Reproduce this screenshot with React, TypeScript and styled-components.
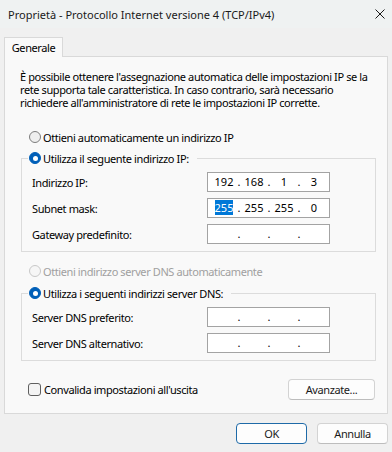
import React from "react";
import styled, { createGlobalStyle } from "styled-components";

const Global = createGlobalStyle`
  html, body { margin: 0; padding: 0; }
  body {
    background: #f0f0f0;
    font-family: "Noto Sans", "Open Sans", sans-serif;
    font-size: 11px;
    letter-spacing: -0.4px;
    color: #000;
  }
  * { box-sizing: border-box; }
`;

const Window = styled.div`
  width: 392px;
  height: 452px;
  display: flex;
  flex-direction: column;
  background: #f0f0f0;
  overflow: hidden;
`;

const TitleBar = styled.div`
  height: 28px;
  display: flex;
  align-items: center;
  justify-content: space-between;
  padding: 0 7px 0 8px;
  background: #eff2f2;
`;

const TitleText = styled.span`
  font-size: 11px;
  letter-spacing: 0;
  color: #1a1a1a;
  white-space: nowrap;
`;

const CloseIcon = styled.svg`
  width: 10px;
  height: 10px;
  display: block;
`;

const TabStrip = styled.div`
  display: flex;
  padding: 9px 4px 0 4px;
`;

const Tab = styled.div`
  width: 59px;
  height: 20px;
  margin-bottom: -1px;
  position: relative;
  z-index: 1;
  display: flex;
  align-items: center;
  justify-content: center;
  background: #f9f9f9;
  border: 1px solid #d9d9d9;
  border-bottom: none;
`;

const Panel = styled.div`
  margin: 0 4px;
  height: 358px;
  background: #f9f9f9;
  border: 1px solid #d9d9d9;
  display: flex;
  flex-direction: column;
  padding: 13px 0 0 0;
`;

const Description = styled.p`
  margin: 0 0 0 15px;
  line-height: 13px;
  width: 352px;
`;

const RadioRow = styled.label<{ $top: number; $left?: number; $disabled?: boolean }>`
  display: flex;
  align-items: center;
  gap: 2px;
  height: 14px;
  margin: ${(p) => p.$top}px 0 0 ${(p) => p.$left ?? 24}px;
  color: ${(p) => (p.$disabled ? "#a0a0a0" : "#000")};
`;

const RadioDot = styled.span<{ $checked?: boolean; $disabled?: boolean }>`
  width: 12px;
  height: 12px;
  border-radius: 50%;
  flex: none;
  display: flex;
  align-items: center;
  justify-content: center;
  background: ${(p) => (p.$checked ? "#005fb8" : p.$disabled ? "#f6f6f6" : "#efefef")};
  border: 1px solid
    ${(p) => (p.$checked ? "#005fb8" : p.$disabled ? "#c8c8c8" : "#7d7d7d")};
  &::after {
    content: "";
    display: ${(p) => (p.$checked ? "block" : "none")};
    width: 5px;
    height: 5px;
    border-radius: 50%;
    background: #fff;
  }
`;

const Group = styled.fieldset<{ $top: number }>`
  margin: ${(p) => p.$top}px 11px 0 16px;
  padding: 0 0 7px 6px;
  border: 1px solid #dcdcdc;
  min-width: 0;
`;

const Legend = styled.legend`
  padding: 0 8px 0 1px;
  margin: 0;
`;

const FieldRow = styled.div<{ $first?: boolean }>`
  display: flex;
  align-items: center;
  height: 20px;
  margin: ${(p) => (p.$first ? 7 : 6)}px 0 0 4px;
`;

const FieldLabel = styled.span`
  width: 175px;
  flex: none;
`;

const IpBox = styled.div`
  width: 123px;
  height: 20px;
  flex: none;
  display: flex;
  align-items: center;
  padding-left: 4px;
  background: #fff;
  border: 1px solid #a3a3a3;
  letter-spacing: 0;
`;

const Octet = styled.span`
  width: 24px;
  text-align: center;
  line-height: 12px;
`;

const Sel = styled.span`
  background: #0078d7;
  color: #fff;
`;

const Dot = styled.span`
  width: 6px;
  text-align: center;
  line-height: 12px;
`;

const BottomRow = styled.div`
  display: flex;
  align-items: center;
  justify-content: space-between;
  margin: 18px 12px 0 23px;
`;

const CheckRow = styled.label`
  display: flex;
  align-items: center;
  gap: 3px;
`;

const CheckBox = styled.span`
  width: 13px;
  height: 13px;
  flex: none;
  border: 1px solid #5f5f5f;
  border-radius: 3px;
  background: #f4f4f4;
`;

const Button = styled.button<{ $w: number; $default?: boolean }>`
  width: ${(p) => p.$w}px;
  height: 21px;
  padding: 0;
  font: inherit;
  letter-spacing: inherit;
  color: #1a1a1a;
  background: #fdfdfd;
  border: 1px solid ${(p) => (p.$default ? "#1e6aa8" : "#d3d3d3")};
  border-bottom-color: ${(p) => (p.$default ? "#1e6aa8" : "#bdbdbd")};
  border-radius: 4px;
`;

const Footer = styled.div`
  display: flex;
  justify-content: flex-end;
  gap: 10px;
  padding: 9px 4px 0 0;
`;

type IpProps = { value?: string[]; selectFirst?: boolean };

const IpField: React.FC<IpProps> = ({ value, selectFirst }) => {
  const parts = value ?? ["", "", "", ""];
  return (
    <IpBox>
      {parts.map((p, i) => (
        <React.Fragment key={i}>
          <Octet>{i === 0 && selectFirst ? <Sel>{p}</Sel> : p}</Octet>
          {i < 3 && <Dot>.</Dot>}
        </React.Fragment>
      ))}
    </IpBox>
  );
};

export default function App() {
  return (
    <>
      <Global />
      <Window>
        <TitleBar>
          <TitleText>Proprietà - Protocollo Internet versione 4 (TCP/IPv4)</TitleText>
          <CloseIcon viewBox="0 0 10 10">
            <path d="M0.5 0.5 L9.5 9.5 M9.5 0.5 L0.5 9.5" stroke="#1a1a1a" strokeWidth="1" fill="none" />
          </CloseIcon>
        </TitleBar>
        <TabStrip>
          <Tab>Generale</Tab>
        </TabStrip>
        <Panel>
          <Description>
            È possibile ottenere l'assegnazione automatica delle impostazioni IP se la rete supporta tale
            caratteristica. In caso contrario, sarà necessario richiedere all'amministratore di rete le
            impostazioni IP corrette.
          </Description>
          <RadioRow $top={21}>
            <RadioDot />
            Ottieni automaticamente un indirizzo IP
          </RadioRow>
          <Group $top={7}>
            <Legend>
              <RadioRow $top={0} $left={0}>
                <RadioDot $checked />
                Utilizza il seguente indirizzo IP:
              </RadioRow>
            </Legend>
            <FieldRow $first>
              <FieldLabel>Indirizzo IP:</FieldLabel>
              <IpField value={["192", "168", "1", "3"]} />
            </FieldRow>
            <FieldRow>
              <FieldLabel>Subnet mask:</FieldLabel>
              <IpField value={["255", "255", "255", "0"]} selectFirst />
            </FieldRow>
            <FieldRow>
              <FieldLabel>Gateway predefinito:</FieldLabel>
              <IpField />
            </FieldRow>
          </Group>
          <RadioRow $top={12} $disabled>
            <RadioDot $disabled />
            Ottieni indirizzo server DNS automaticamente
          </RadioRow>
          <Group $top={8}>
            <Legend>
              <RadioRow $top={0} $left={0}>
                <RadioDot $checked />
                Utilizza i seguenti indirizzi server DNS:
              </RadioRow>
            </Legend>
            <FieldRow $first>
              <FieldLabel>Server DNS preferito:</FieldLabel>
              <IpField />
            </FieldRow>
            <FieldRow>
              <FieldLabel>Server DNS alternativo:</FieldLabel>
              <IpField />
            </FieldRow>
          </Group>
          <BottomRow>
            <CheckRow>
              <CheckBox />
              Convalida impostazioni all'uscita
            </CheckRow>
            <Button $w={87}>Avanzate...</Button>
          </BottomRow>
        </Panel>
        <Footer>
          <Button $w={71} $default>OK</Button>
          <Button $w={71}>Annulla</Button>
        </Footer>
      </Window>
    </>
  );
}
